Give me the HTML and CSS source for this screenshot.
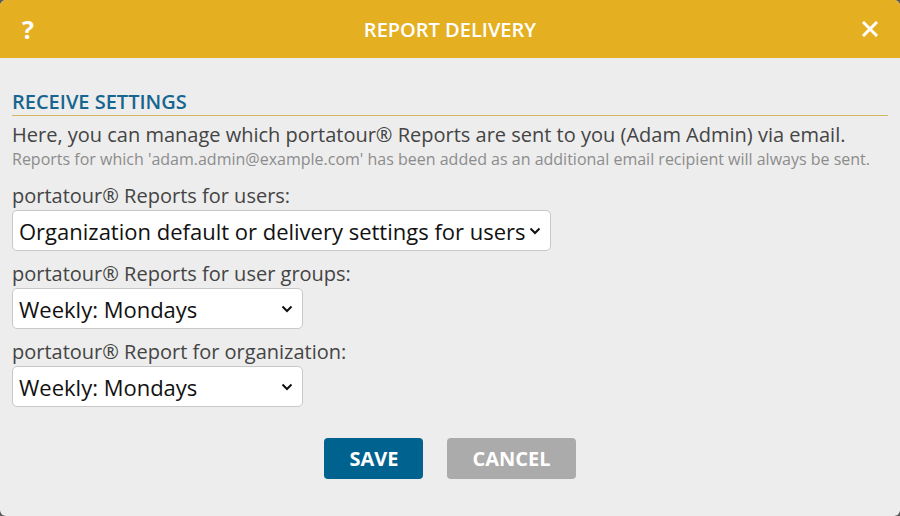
FILE: index.html
```html
<!DOCTYPE html>
<html lang="en">
<head>
    <meta charset="UTF-8">
    <meta name="viewport" content="width=device-width, initial-scale=1.0">
    <title>Report Delivery</title>
    <link rel="stylesheet" href="styles.css">
</head>
<body>
    <div class="dialog">
        <div class="dialog-header">
            <span class="help">?</span>
            <h1>REPORT DELIVERY</h1>
            <span class="close">
                <svg width="16" height="16" viewBox="0 0 16 16"><path d="M2 2 L14 14 M14 2 L2 14" stroke="#fff" stroke-width="3" stroke-linecap="square"/></svg>
            </span>
        </div>

        <div class="dialog-body">
            <h2 class="section-title">RECEIVE SETTINGS</h2>
            <p class="intro">Here, you can manage which portatour® Reports are sent to you (Adam Admin) via email.</p>
            <p class="hint">Reports for which 'adam.admin@example.com' has been added as an additional email recipient will always be sent.</p>

            <div class="field">
                <label for="users_report">portatour® Reports for users:</label>
                <select id="users_report" class="wide">
                    <option>Organization default or delivery settings for users</option>
                    <option>Weekly: Mondays</option>
                    <option>Never</option>
                </select>
            </div>

            <div class="field">
                <label for="groups_report">portatour® Reports for user groups:</label>
                <select id="groups_report" class="short">
                    <option>Weekly: Mondays</option>
                    <option>Never</option>
                </select>
            </div>

            <div class="field">
                <label for="org_report">portatour® Report for organization:</label>
                <select id="org_report" class="short">
                    <option>Weekly: Mondays</option>
                    <option>Never</option>
                </select>
            </div>

            <div class="actions">
                <button class="btn btn-save">SAVE</button>
                <button class="btn btn-cancel">CANCEL</button>
            </div>
        </div>
    </div>
</body>
</html>
```

FILE: styles.css
```css
body { margin: 0; background: #5b5b5b; font-family: "Open Sans", "Noto Sans", sans-serif; color: #444; }
.dialog { height: 516px; background: #ededed; border-radius: 6px; overflow: hidden; }
.dialog-header { height: 58px; background: #e5af22; color: #fff; display: flex; align-items: center; padding: 0 22px 0 22px; }
.dialog-header h1 { flex: 1; margin: 0; text-align: center; font-size: 20px; font-weight: 600; }
.help { font-size: 25px; font-weight: 700; width: 16px; line-height: 1; }
.close { width: 16px; height: 16px; display: flex; }
.dialog-body { padding: 31px 12px 0; }
.section-title { margin: 0; font-size: 20px; font-weight: 600; color: #17668f; line-height: 26px; border-bottom: 1px solid #d3b462; }
.intro { margin: 6px 0 0; font-size: 20px; line-height: 26px; }
.hint { margin: 0; font-size: 16px; line-height: 22px; color: #8c8c8c; }
.field { margin-top: 13px; }
.field + .field { margin-top: 10px; }
label { display: block; font-size: 20px; line-height: 26px; margin-bottom: 1px; }
select {
    appearance: none; font-family: inherit; font-size: 22px; color: #111; height: 41px; padding: 0 18px 0 6px;
    border: 1px solid #c8c8c8; border-radius: 5px;
    background: #fff url("data:image/svg+xml,%3Csvg xmlns='http://www.w3.org/2000/svg' width='12' height='8' viewBox='0 0 12 8'%3E%3Cpath d='M1.5 1.5 L6 6 L10.5 1.5' fill='none' stroke='%23111' stroke-width='2'/%3E%3C/svg%3E") no-repeat right 9px center;
}
select.wide { width: 539px; }
select.short { width: 291px; }
.actions { display: flex; justify-content: center; gap: 24px; margin-top: 31px; }
.btn { border: none; border-radius: 4px; color: #fff; font-family: inherit; font-size: 20px; font-weight: 700; height: 41px; padding: 0 25px; }
.btn-save { background: #00628f; }
.btn-cancel { background: #ababab; }
```
